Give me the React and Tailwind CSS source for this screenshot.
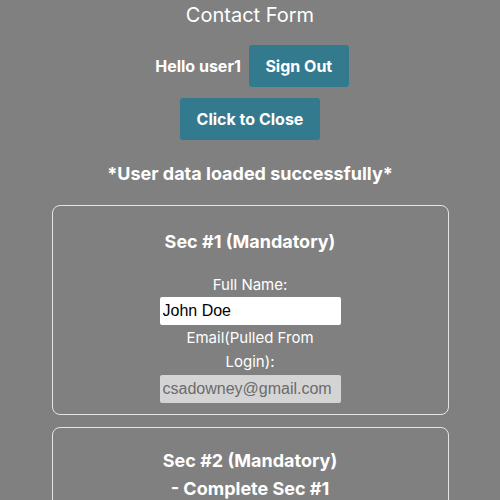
import React from 'react';

function Section({ title, children, top = 'pt-[22px]' }) {
  return (
    <div className={`w-[397px] border border-[#e5e5e5] rounded-lg flex flex-col items-center pb-[11px] ${top}`}>
      <h2 className="text-[18px] font-bold text-center leading-[28px] w-[182px]">{title}</h2>
      {children}
    </div>
  );
}

export default function App() {
  return (
    <div
      className="min-h-[500px] bg-[#808080] text-white flex flex-col items-center"
      style={{ fontFamily: 'Inter, "Noto Sans", sans-serif' }}
    >
      <h1 className="text-[20px] leading-[30px] mt-0">Contact Form</h1>
      <div className="flex items-center gap-2 mt-[15px] ml-[4px]">
        <span className="text-[16px] font-bold">Hello user1</span>
        <button className="bg-[#347a8f] rounded-[3px] w-[100px] h-[42px] text-[16px] font-bold">Sign Out</button>
      </div>
      <button className="bg-[#347a8f] rounded-[3px] w-[140px] h-[42px] text-[16px] font-bold mt-[11px]">Click to Close</button>
      <p className="text-[18px] font-bold mt-[20px] leading-[28px]">*User data loaded successfully*</p>
      <div className="flex flex-col items-center gap-[12px] mt-[17px]">
        <Section title="Sec #1 (Mandatory)">
          <label className="text-[15px] leading-[24px] mt-[17px]">Full Name:</label>
          <input
            className="w-[181px] h-[28px] bg-white text-black text-[16px] px-[3px] rounded-[2px] outline-none"
            style={{ fontFamily: '"Liberation Sans", Arial, sans-serif' }}
            defaultValue="John Doe"
          />
          <label className="text-[15px] leading-[24px] w-[180px] text-center mt-[1px]">Email(Pulled From Login):</label>
          <input
            className="w-[181px] h-[28px] bg-[#d4d4d4] text-[#6b6b6b] text-[16px] px-[3px] rounded-[2px] outline-none mt-[1px]"
            style={{ fontFamily: '"Liberation Sans", Arial, sans-serif' }}
            defaultValue="csadowney@gmail.com"
            disabled
          />
        </Section>
        <Section title="Sec #2 (Mandatory) - Complete Sec #1" top="pt-[19px]">
          <div className="h-[60px]" />
        </Section>
      </div>
    </div>
  );
}
